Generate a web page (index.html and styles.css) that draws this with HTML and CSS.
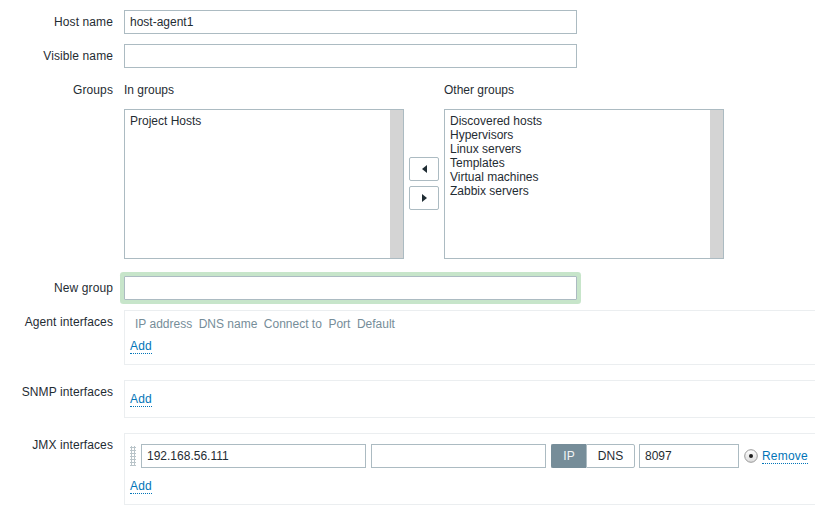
FILE: index.html
```html
<!DOCTYPE html>
<html>
<head>
<meta charset="utf-8">
<link rel="stylesheet" href="styles.css">
</head>
<body>
<form class="form">
  <div class="row">
    <label class="lbl">Host name</label>
    <div class="field"><input class="text wide" type="text" value="host-agent1"></div>
  </div>
  <div class="row">
    <label class="lbl">Visible name</label>
    <div class="field"><input class="text wide" type="text" value=""></div>
  </div>
  <div class="row row-groups">
    <label class="lbl">Groups</label>
    <div class="field groups">
      <div class="gcol">
        <div class="ghead">In groups</div>
        <div class="listbox">
          <div class="items"><div>Project Hosts</div></div>
          <div class="sbar"></div>
        </div>
      </div>
      <div class="movebtns">
        <button type="button" class="mbtn"><span class="tri-l"></span></button>
        <button type="button" class="mbtn"><span class="tri-r"></span></button>
      </div>
      <div class="gcol">
        <div class="ghead">Other groups</div>
        <div class="listbox">
          <div class="items">
            <div>Discovered hosts</div>
            <div>Hypervisors</div>
            <div>Linux servers</div>
            <div>Templates</div>
            <div>Virtual machines</div>
            <div>Zabbix servers</div>
          </div>
          <div class="sbar"></div>
        </div>
      </div>
    </div>
  </div>
  <div class="row row-newgroup">
    <label class="lbl">New group</label>
    <div class="field"><input class="text wide focus" type="text" value=""></div>
  </div>
  <div class="row row-agent">
    <label class="lbl">Agent interfaces</label>
    <div class="field">
      <div class="ifbox">
        <div class="ifhead">
          <span>IP address</span><span>DNS name</span><span>Connect to</span><span>Port</span><span>Default</span>
        </div>
        <div class="addrow"><a class="link" href="#">Add</a></div>
      </div>
    </div>
  </div>
  <div class="row row-snmp">
    <label class="lbl">SNMP interfaces</label>
    <div class="field">
      <div class="ifbox">
        <div class="addrow"><a class="link" href="#">Add</a></div>
      </div>
    </div>
  </div>
  <div class="row row-jmx">
    <label class="lbl">JMX interfaces</label>
    <div class="field">
      <div class="ifbox">
        <div class="ifrow">
          <span class="drag"></span>
          <input class="text ip" type="text" value="192.168.56.111">
          <input class="text dns" type="text" value="">
          <div class="toggle"><span class="tg on">IP</span><span class="tg">DNS</span></div>
          <input class="text port" type="text" value="8097">
          <svg class="radio" width="14" height="14" viewBox="0 0 14 14">
            <defs>
              <linearGradient id="rg" x1="0" y1="0" x2="0" y2="1">
                <stop offset="0" stop-color="#ffffff"/>
                <stop offset="1" stop-color="#dcdcdc"/>
              </linearGradient>
            </defs>
            <circle cx="7" cy="7" r="6.3" fill="url(#rg)" stroke="#9a9a9a" stroke-width="1"/>
            <circle cx="7" cy="7" r="2" fill="#1f1f1f"/>
          </svg>
          <a class="link" href="#">Remove</a>
        </div>
        <div class="addrow"><a class="link" href="#">Add</a></div>
      </div>
    </div>
  </div>
</form>
</body>
</html>
```

FILE: styles.css
```css
html, body {
  margin: 0;
  padding: 0;
  background: #ffffff;
  overflow: hidden;
}
body {
  font-family: "Liberation Sans", Arial, sans-serif;
  font-size: 12px;
  line-height: 14px;
  color: #1f2c33;
}
.form {
  padding-top: 10px;
}
.row {
  display: grid;
  grid-template-columns: 113px 1fr;
  column-gap: 11px;
  margin-bottom: 10px;
}
.lbl {
  text-align: right;
  padding-top: 5px;
  line-height: 14px;
  white-space: nowrap;
  letter-spacing: 0.1px;
}
.field {
  min-width: 0;
}
.text {
  box-sizing: border-box;
  height: 24px;
  border: 1px solid #acbbc2;
  border-radius: 0;
  padding: 0 5px;
  font-family: "Liberation Sans", Arial, sans-serif;
  font-size: 12px;
  color: #1f2c33;
  background: #ffffff;
  outline: none;
  margin: 0;
  display: block;
}
.wide {
  width: 453px;
}
.focus {
  box-shadow: 0 0 0 4px #c7e5ca;
  border-radius: 1px;
}
.row-groups {
  margin-bottom: 17px;
}
.groups {
  display: flex;
  align-items: flex-start;
}
.gcol {
  width: 280px;
}
.ghead {
  padding-top: 5px;
  height: 14px;
  margin-bottom: 12px;
}
.listbox {
  box-sizing: border-box;
  width: 280px;
  height: 150px;
  border: 1px solid #acbbc2;
  display: flex;
}
.items {
  flex: 1;
  padding: 4px 5px;
}
.sbar {
  width: 13px;
  background: #d4d4d4;
}
.movebtns {
  width: 30px;
  margin: 30px 5px 0;
  height: 150px;
  display: flex;
  flex-direction: column;
  justify-content: center;
  gap: 5px;
}
.mbtn {
  box-sizing: border-box;
  width: 30px;
  height: 24px;
  border: 1px solid #acbbc2;
  border-radius: 2px;
  background: #ffffff;
  padding: 0;
  margin: 0;
  display: flex;
  align-items: center;
  justify-content: center;
}
.tri-l, .tri-r {
  width: 0;
  height: 0;
  border-top: 4px solid transparent;
  border-bottom: 4px solid transparent;
}
.tri-l {
  border-right: 5px solid #1f2c33;
}
.tri-r {
  border-left: 5px solid #1f2c33;
}
.row-newgroup {
  margin-bottom: 10px;
}
.row-agent, .row-snmp {
  margin-bottom: 15px;
}
.ifbox {
  box-sizing: border-box;
  width: 720px;
  border: 1px solid #ebeef0;
  padding: 5px;
}
.ifhead {
  display: flex;
  gap: 6.5px;
  padding-left: 5px;
  margin-top: 1px;
  height: 14px;
  padding-bottom: 2px;
  color: #768d99;
  white-space: nowrap;
}
.addrow {
  padding: 6px 0 6px;
  line-height: 14px;
}
.link {
  color: #0275b8;
  text-decoration: none;
  border-bottom: 1px dotted #0275b8;
  letter-spacing: 0.2px;
}
.ifrow {
  display: flex;
  align-items: center;
  padding: 5px 0 5px;
}
.drag {
  width: 6px;
  height: 20px;
  margin-right: 5px;
  background-image: radial-gradient(circle, #b9c4c9 1px, transparent 1.1px);
  background-size: 3px 3px;
  background-position: 0 0;
}
.ip {
  width: 225px;
  margin-right: 5px;
}
.dns {
  width: 175px;
  margin-right: 5px;
}
.toggle {
  display: flex;
  height: 24px;
  margin-right: 4px;
}
.tg {
  box-sizing: border-box;
  height: 24px;
  line-height: 22px;
  border: 1px solid #acbbc2;
  padding: 0 11px;
  background: #ffffff;
  color: #1f2c33;
}
.tg:first-child {
  border-radius: 2px 0 0 2px;
  border-right: none;
}
.tg:last-child {
  border-radius: 0 2px 2px 0;
  width: 49px;
  text-align: center;
  padding: 0;
}
.tg.on {
  background: #768d99;
  border-color: #768d99;
  color: #f2f4f5;
  width: 35px;
  text-align: center;
  padding: 0;
}
.port {
  width: 100px;
  margin-right: 5px;
}
.radio {
  margin-right: 4px;
  display: block;
}
```
